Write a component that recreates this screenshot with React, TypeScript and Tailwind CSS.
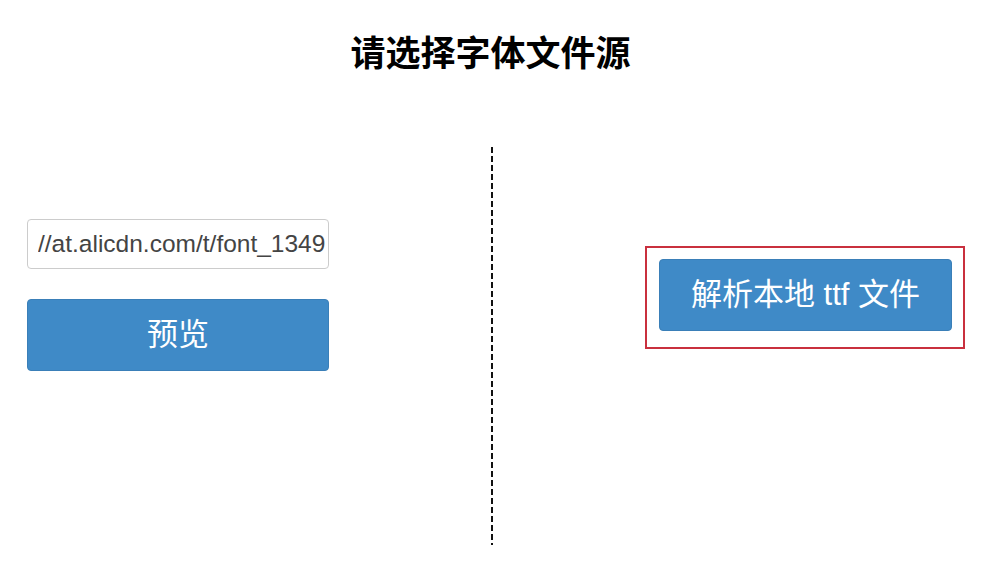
export default function App() {
  return (
    <div className="h-[582px] w-[1001px] bg-white font-['Liberation_Sans','Noto_Sans_CJK_SC',sans-serif]">
      <h1 className="pr-[20px] pt-[36px] text-center text-[35px] font-bold leading-[35px] text-black">
        请选择字体文件源
      </h1>
      <div className="mt-[76px] flex h-[398px]">
        <div className="flex w-[491px] flex-col gap-[30px] pl-[27px] pt-[72px]">
          <input
            type="text"
            readOnly
            value="//at.alicdn.com/t/font_1349"
            className="h-[50px] w-[302px] rounded-[4px] border border-[#cccccc] pl-[10px] pr-[2px] text-[24.5px] text-[#444444] outline-none"
          />
          <button
            type="button"
            className="h-[72px] w-[302px] rounded-[4px] border border-[#3a7fb8] bg-[#3f8ac7] text-[31px] text-white"
          >
            预览
          </button>
        </div>
        <div className="w-[2px] bg-[repeating-linear-gradient(to_bottom,#111_0_6px,transparent_6px_9px)]" />
        <div className="flex-1 pl-[152px] pt-[99px]">
          <div className="w-[320px] border-2 border-[#c9303e] pb-[16px] pl-[12px] pr-[11px] pt-[11px]">
            <button
              type="button"
              className="h-[72px] w-[293px] rounded-[4px] border border-[#3a7fb8] bg-[#3f8ac7] text-[31px] text-white"
            >
              解析本地 ttf 文件
            </button>
          </div>
        </div>
      </div>
    </div>
  );
}
